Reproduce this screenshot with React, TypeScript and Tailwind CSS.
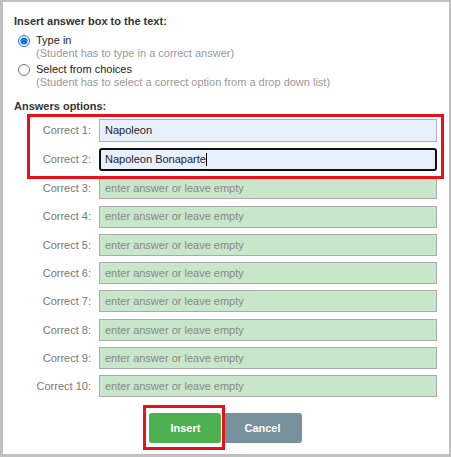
import React from 'react';

const rows = Array.from({ length: 10 }, (_, i) => i + 1);

function Field({ n }: { n: number }) {
  if (n === 1) {
    return (
      <div className="flex-1 h-[23px] border border-[#b0b0b0] bg-[#e8f0fe] pl-[5px] flex items-center text-[11px] text-[#222]">
        Napoleon
      </div>
    );
  }
  if (n === 2) {
    return (
      <div className="flex-1 h-[23px] border-2 border-[#111] rounded-[3px] bg-[#e8f0fe] pl-[4px] flex items-center text-[11px] text-[#222]">
        Napoleon Bonaparte
        <span className="inline-block w-px h-[13px] bg-black" />
      </div>
    );
  }
  return (
    <div className="flex-1 h-[22px] border border-[#aaa] bg-[#c8e6c9] pl-[5px] flex items-center text-[11px] text-[#888]">
      enter answer or leave empty
    </div>
  );
}

function Row({ n }: { n: number }) {
  return (
    <div className="flex items-center gap-[8px]">
      <div className="w-[77px] text-right text-[11px] text-[#777]">Correct {n}:</div>
      <Field n={n} />
    </div>
  );
}

export default function App() {
  return (
    <div
      className="w-[451px] h-[457px] bg-white border-[#c0c0c0] border-l-[3px] border-t-2 border-r-2 border-b-[3px] pl-[11px] pr-[12px] pt-[12px] text-[#333]"
      style={{ fontFamily: '"Liberation Sans", Arial, sans-serif' }}
    >
      <div className="h-[14px] leading-[14px] text-[11px] font-bold text-[#333]">Insert answer box to the text:</div>

      <label className="mt-[6px] flex items-center h-[13px]">
        <input type="radio" name="mode" defaultChecked className="w-[12px] h-[12px] ml-[4px] mr-[6px] m-0 accent-[#1a73e8]" />
        <span className="text-[11px] leading-[13px] text-[#222]">Type in</span>
      </label>
      <div className="pl-[22px] h-[12px] leading-[12px] text-[11px] text-[#999]">(Student has to type in a correct answer)</div>

      <label className="mt-[4px] flex items-center h-[13px]">
        <input type="radio" name="mode" className="w-[12px] h-[12px] ml-[4px] mr-[6px] m-0" />
        <span className="text-[11px] leading-[13px] text-[#222]">Select from choices</span>
      </label>
      <div className="pl-[22px] h-[12px] leading-[12px] text-[11px] text-[#999]">(Student has to select a correct option from a drop down list)</div>

      <div className="mt-[11px] h-[14px] leading-[14px] text-[11px] font-bold text-[#333]">Answers options:</div>

      <div className="mt-[6px] flex flex-col gap-[6.3px]">
        <div className="relative flex flex-col gap-[6px]">
          <Row n={1} />
          <Row n={2} />
          <div className="absolute left-[13px] -right-[7px] -top-[5px] -bottom-[8px] border-[3px] border-[#e8101a] pointer-events-none" />
        </div>
        {rows.slice(2).map((n) => (
          <Row key={n} n={n} />
        ))}
      </div>

      <div className="mt-[16px] flex justify-center gap-[2px]">
        <div className="relative">
          <button className="h-[30px] px-[21px] rounded-[3px] bg-[#4caf50] text-white text-[11px] font-bold">Insert</button>
          <div className="absolute -left-[6px] -right-[4px] -top-[8px] -bottom-[7px] border-[3px] border-[#e8101a] pointer-events-none" />
        </div>
        <button className="h-[30px] px-[21px] rounded-[3px] bg-[#78909c] text-white text-[11px] font-bold">Cancel</button>
      </div>
    </div>
  );
}
